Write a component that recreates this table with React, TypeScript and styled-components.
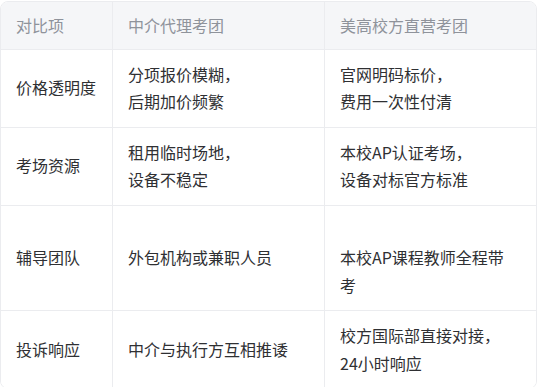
import React from 'react'
import styled, { createGlobalStyle } from 'styled-components'

const GlobalStyle = createGlobalStyle`
  html, body {
    margin: 0;
    padding: 0;
    background: #ffffff;
  }
  body {
    font-family: "Noto Sans CJK SC", "Noto Sans", "Liberation Sans", sans-serif;
  }
`

const Page = styled.div`
  padding-top: 1px;
`

const Table = styled.div`
  width: 537px;
  box-sizing: border-box;
  display: grid;
  grid-template-columns: 112px 212px 211px;
  border: 1px solid #ebecef;
  border-radius: 8px;
  overflow: hidden;
`

const Cell = styled.div<{ $head?: boolean; $last?: boolean; $bottom?: boolean }>`
  display: flex;
  flex-direction: column;
  justify-content: center;
  padding: ${(p) => (p.$head ? '9.5px 15px' : '11px 15px')};
  background: ${(p) => (p.$head ? '#f5f6f8' : '#ffffff')};
  color: ${(p) => (p.$head ? '#8f939b' : '#2f3033')};
  font-size: 16px;
  line-height: 27.5px;
  white-space: nowrap;
  border-right: ${(p) => (p.$last ? 'none' : '1px solid #ebecef')};
  border-bottom: ${(p) => (p.$bottom ? 'none' : '1px solid #ebecef')};
`

const Line = styled.span`
  display: block;
  height: 27.5px;
`

type Row = {
  item: string
  agency: string[]
  school: string[]
}

const rows: Row[] = [
  { item: '价格透明度', agency: ['分项报价模糊，', '后期加价频繁'], school: ['官网明码标价，', '费用一次性付清'] },
  { item: '考场资源', agency: ['租用临时场地，', '设备不稳定'], school: ['本校AP认证考场，', '设备对标官方标准'] },
  { item: '辅导团队', agency: ['外包机构或兼职人员'], school: ['', '本校AP课程教师全程带', '考'] },
  { item: '投诉响应', agency: ['中介与执行方互相推诿'], school: ['校方国际部直接对接，', '24小时响应'] },
]

const Lines = ({ lines }: { lines: string[] }) => (
  <>
    {lines.map((l, i) => (
      <Line key={i}>{l}</Line>
    ))}
  </>
)

export default function App() {
  return (
    <Page>
      <GlobalStyle />
      <Table>
        <Cell $head>对比项</Cell>
        <Cell $head>中介代理考团</Cell>
        <Cell $head $last>美高校方直营考团</Cell>
        {rows.map((r, i) => {
          const bottom = i === rows.length - 1
          return (
            <React.Fragment key={r.item}>
              <Cell $bottom={bottom}>{r.item}</Cell>
              <Cell $bottom={bottom}>
                <Lines lines={r.agency} />
              </Cell>
              <Cell $bottom={bottom} $last>
                <Lines lines={r.school} />
              </Cell>
            </React.Fragment>
          )
        })}
      </Table>
    </Page>
  )
}
